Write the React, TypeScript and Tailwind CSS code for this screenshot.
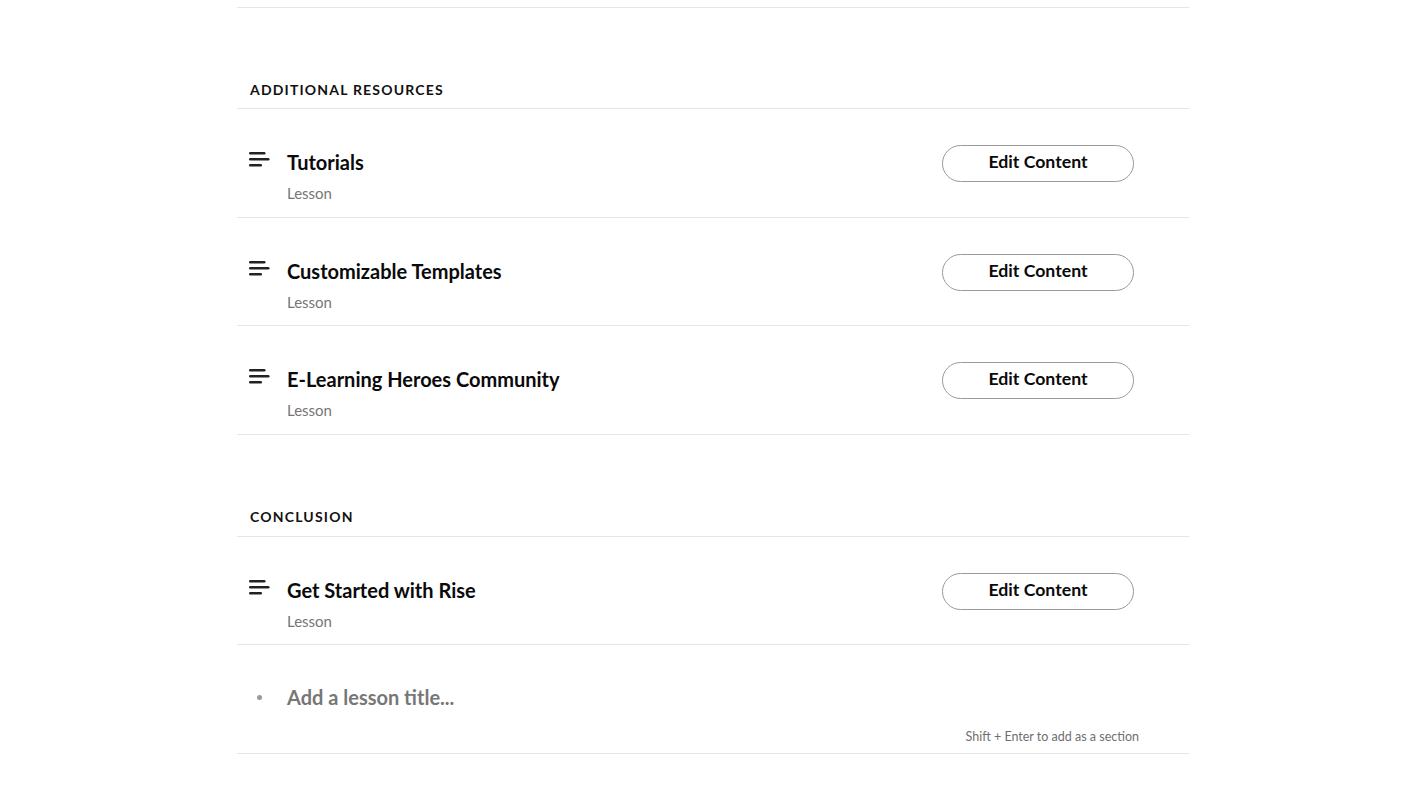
import React from "react";

function LessonIcon() {
  return (
    <svg width="22" height="18" viewBox="0 0 22 18" className="block">
      <rect x="0" y="2" width="16.5" height="2.4" rx="1.2" fill="#222" />
      <rect x="0" y="8" width="20.5" height="2.4" rx="1.2" fill="#222" />
      <rect x="0" y="14" width="13" height="2.4" rx="1.2" fill="#222" />
    </svg>
  );
}

function Header({ title, h, pb }: { title: string; h: string; pb: string }) {
  return (
    <div className={`${h} ${pb} flex items-end pl-[13px] border-b border-[#e6e6e6]`}>
      <div className="text-[14px] leading-[20px] font-bold tracking-[0.085em] text-[#111]">{title}</div>
    </div>
  );
}

function Row({ title, h }: { title: string; h: string }) {
  return (
    <div className={`${h} flex border-b border-[#e6e6e6] pl-[12px] pr-[55px]`}>
      <div className="pt-[41px] w-[38px] shrink-0">
        <LessonIcon />
      </div>
      <div className="flex-1 pt-[41px]">
        <div className="text-[20px] leading-[24px] font-bold text-[#0a0a0a]">{title}</div>
        <div className="mt-[9px] text-[15px] leading-[20px] text-[#767676]">Lesson</div>
      </div>
      <div className="pt-[36px]">
        <button className="w-[192px] h-[37px] rounded-full border border-[#9a9a9a] bg-white text-[17.7px] leading-[22px] font-bold text-[#0a0a0a] pb-[3px]">
          Edit Content
        </button>
      </div>
    </div>
  );
}

export default function App() {
  return (
    <div className="min-h-screen bg-white" style={{ fontFamily: "Lato, 'Open Sans', sans-serif" }}>
      <div className="w-[952px] ml-[237px]">
        <div className="h-[8px] border-b border-[#e6e6e6]" />
        <Header title="ADDITIONAL RESOURCES" h="h-[101px]" pb="pb-[8px]" />
        <Row title="Tutorials" h="h-[109px]" />
        <Row title="Customizable Templates" h="h-[108px]" />
        <Row title="E-Learning Heroes Community" h="h-[109px]" />
        <Header title="CONCLUSION" h="h-[102px]" pb="pb-[9px]" />
        <Row title="Get Started with Rise" h="h-[108px]" />
        <div className="h-[109px] border-b border-[#e6e6e6] flex flex-col pl-[12px] pr-[50px]">
          <div className="flex items-center pt-[40px]">
            <div className="w-[38px] shrink-0 flex justify-start pl-[8px]">
              <span className="block w-[5px] h-[5px] rounded-full bg-[#999]" />
            </div>
            <div className="text-[20px] leading-[24px] font-bold text-[#777]">Add a lesson title...</div>
          </div>
          <div className="mt-[20px] text-right text-[12.5px] leading-[16px] text-[#6f6f6f]">
            Shift + Enter to add as a section
          </div>
        </div>
      </div>
    </div>
  );
}
